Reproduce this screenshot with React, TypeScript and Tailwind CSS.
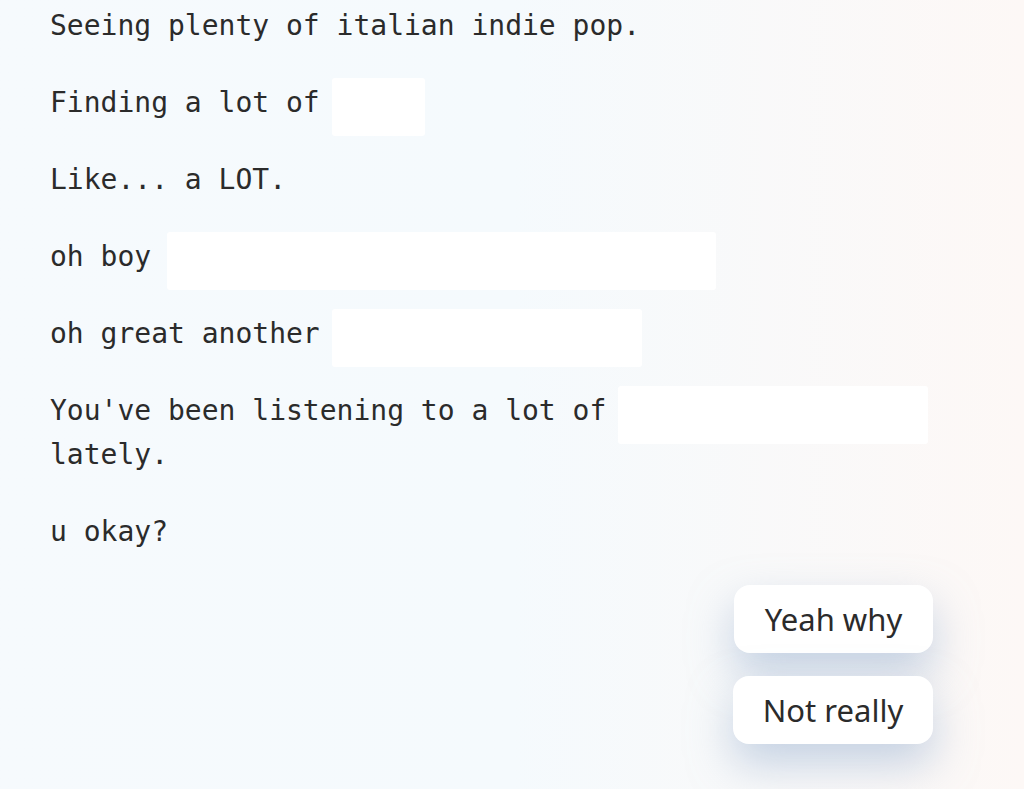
import React from "react";

const Blank = ({ w, ml }: { w: string; ml: string }) => (
  <span className={`inline-block h-[58px] ${w} ${ml} bg-white rounded-[3px] align-middle mt-[-5px] mb-[-11px]`} />
);

export default function App() {
  return (
    <div className="min-h-[789px] w-full bg-gradient-to-r from-[#f6fafd] via-[#f5fafd] to-[#fdf8f6] relative overflow-hidden">
      <div
        className="pl-[50px] pt-[4px] pr-[80px] text-[28px] leading-[44px] text-[#2b2b2b] flex flex-col gap-[33px]"
        style={{ fontFamily: '"DejaVu Sans Mono", monospace' }}
      >
        <p>Seeing plenty of italian indie pop.</p>
        <p>
          Finding a lot of <Blank w="w-[93px]" ml="ml-[-5px]" />
        </p>
        <p>Like... a LOT.</p>
        <p>
          oh boy <Blank w="w-[549px]" ml="ml-[-1px]" />
        </p>
        <p>
          oh great another <Blank w="w-[310px]" ml="ml-[-5px]" />
        </p>
        <p>
          You've been listening to a lot of <Blank w="w-[310px]" ml="ml-[-5px]" />
          <br />
          lately.
        </p>
        <p>u okay?</p>
      </div>
      <div
        className="flex flex-col items-end gap-[23px] pr-[91px] mt-[31px]"
        style={{ fontFamily: '"Noto Sans", sans-serif' }}
      >
        <button className="w-[199px] h-[68px] bg-white rounded-[16px] text-[31px] text-[#2b2b2b] shadow-[0_20px_44px_rgba(145,172,205,0.5)]">
          Yeah why
        </button>
        <button className="w-[200px] h-[68px] bg-white rounded-[16px] text-[31px] text-[#2b2b2b] shadow-[0_20px_44px_rgba(145,172,205,0.5)]">
          Not really
        </button>
      </div>
    </div>
  );
}
